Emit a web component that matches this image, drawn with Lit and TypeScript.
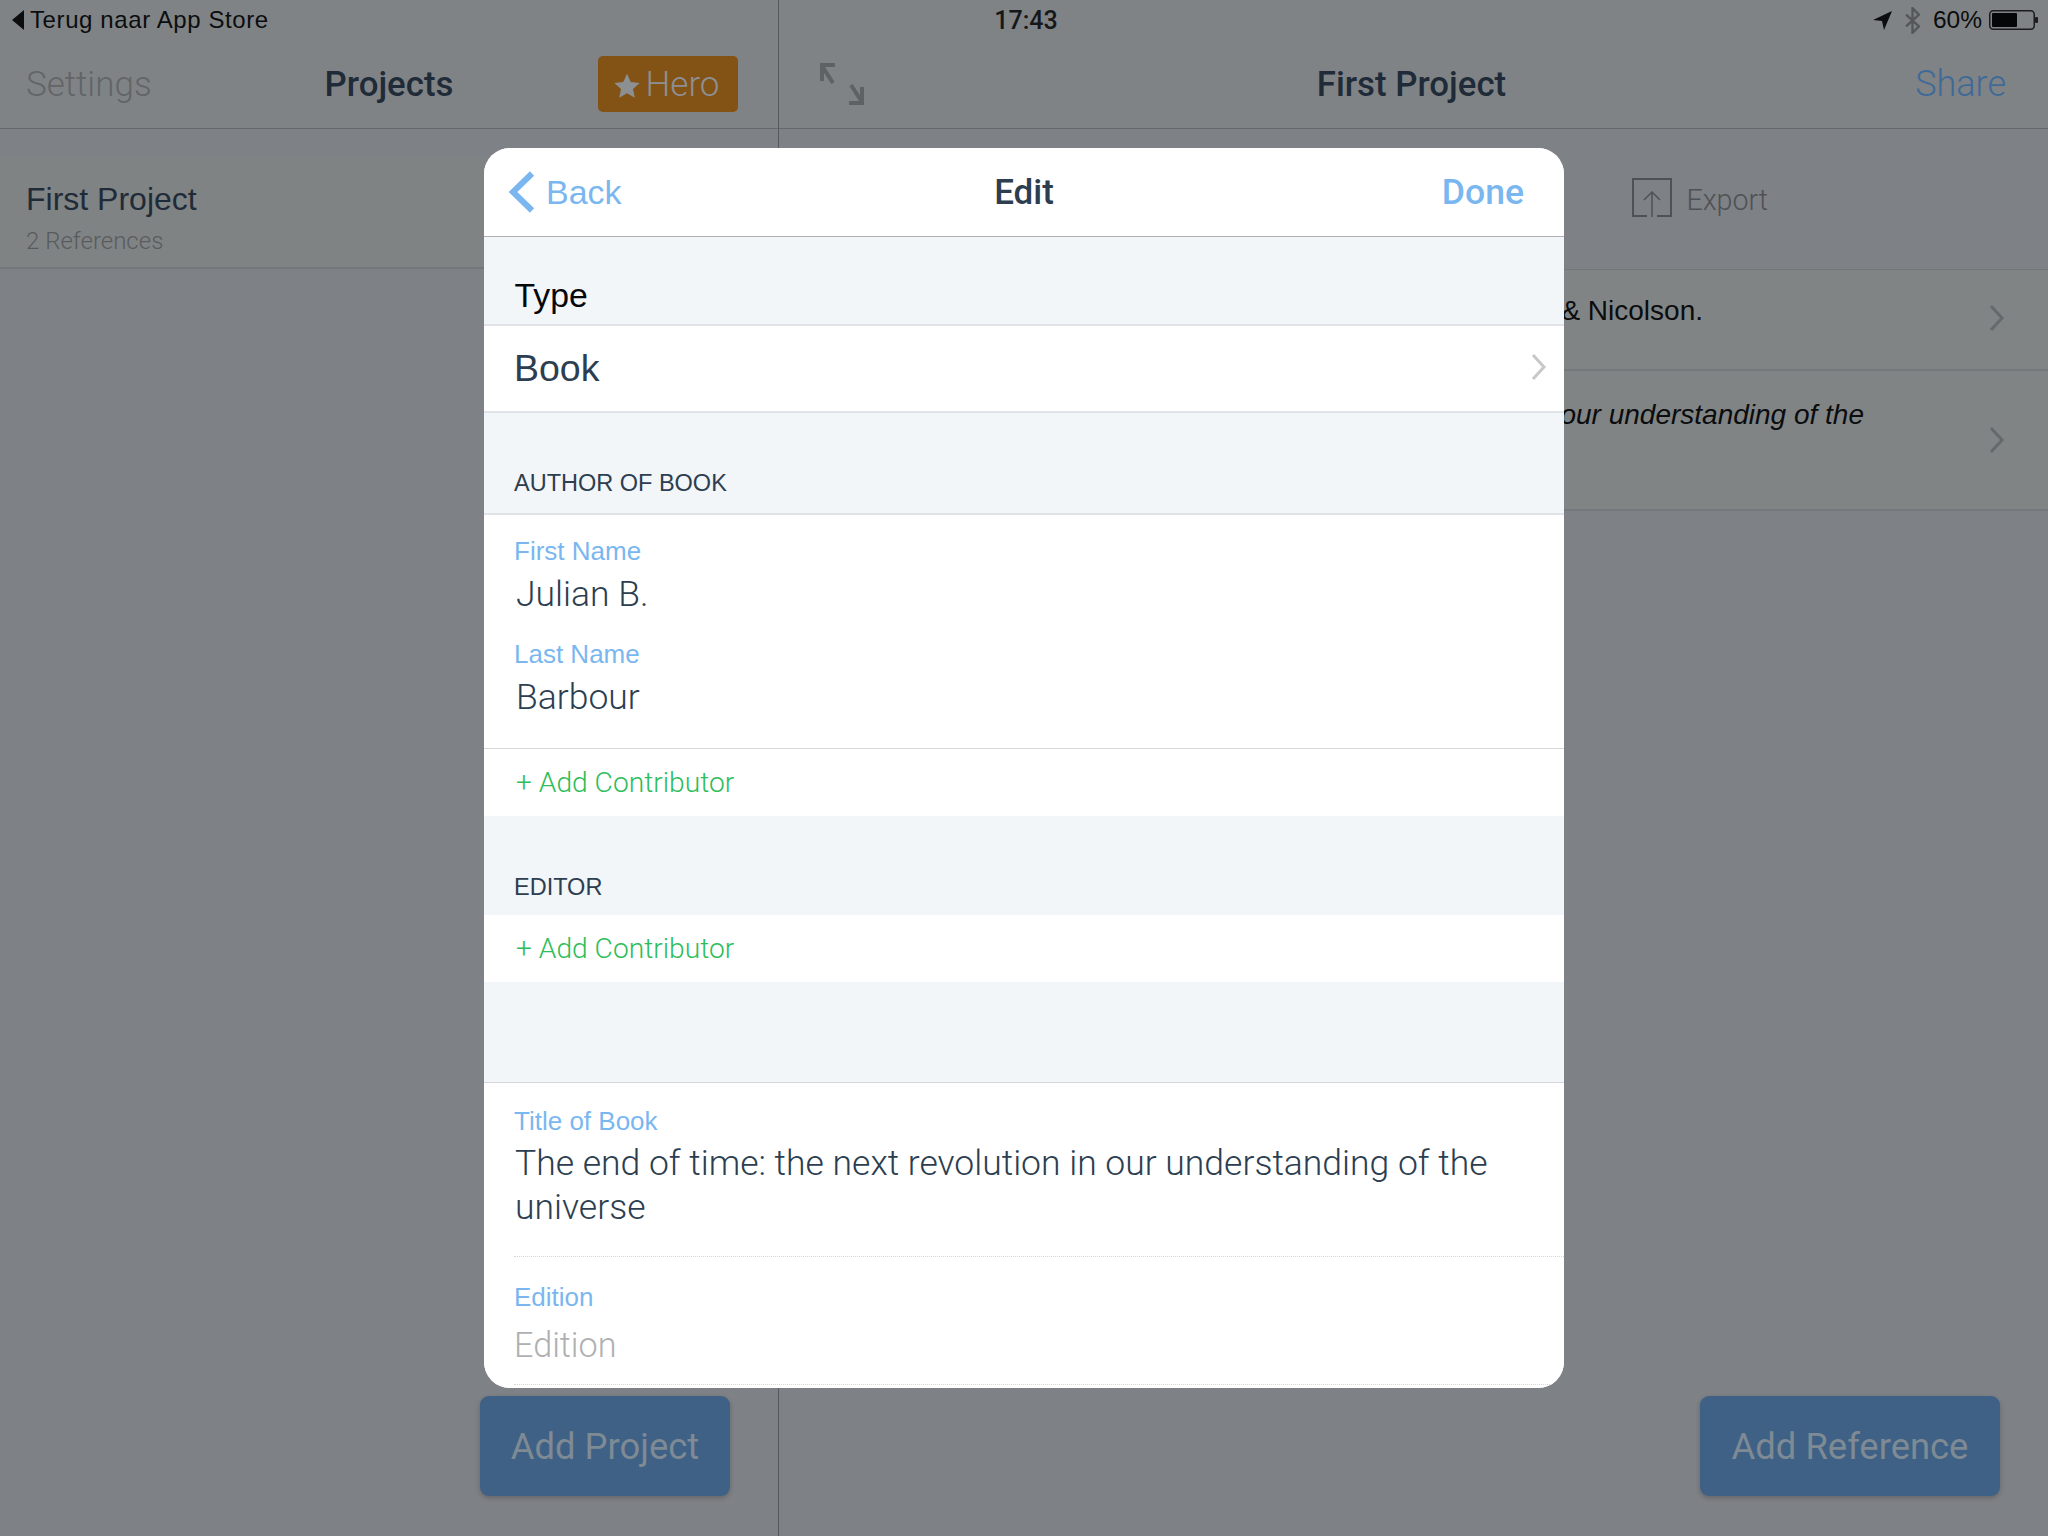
import { LitElement, html, css } from "lit";
import { customElement } from "lit/decorators.js";

const chevron = () => html`<svg viewBox="0 0 16 30" fill="none"><path d="M2 3l11 12L2 27" stroke="currentColor" stroke-width="3"/></svg>`;

@customElement("app-root")
export class AppRoot extends LitElement {
  static styles = css`
    :host { display: block; width: 2048px; height: 1536px; position: relative; overflow: hidden; background: #7e8185; font-family: "Liberation Sans", Arial, sans-serif; }
    * { box-sizing: border-box; }
    .page { display: grid; grid-template-columns: 779px 1269px; height: 1536px; }
    .pane { position: relative; display: flex; flex-direction: column; min-width: 0; }
    .pane.left { border-right: 1px solid #55585d; }
    .navbar { height: 129px; flex: none; background: #808385; border-bottom: 1px solid #65686c; padding: 40px 26px 0; display: grid; align-items: center; position: relative; }
    .left .navbar { grid-template-columns: 1fr auto 1fr; }
    .right .navbar { grid-template-columns: 1fr auto 1fr; padding: 40px 42px 0 38px; }
    .nav-muted { font-size: 35px; color: #626568; font-family: Roboto, sans-serif; font-weight: 300; }
    .nav-title { font-family: Roboto, sans-serif; font-weight: 500; font-size: 34.8px; color: #1f2b38; }
    .hero { justify-self: end; margin-right: 14px; width: 140px; height: 56px; background: #835316; border-radius: 5px; color: #8d9093; display: flex; align-items: center; justify-content: center; gap: 5px; font-size: 35px; font-family: Roboto, sans-serif; font-weight: 300; padding-right: 4px; }
    .hero svg { width: 28px; height: 28px; margin-top: 4px; }
    .expand { width: 46px; height: 42px; color: #5f6265; margin-top: -1px; margin-left: 2px; }
    .share { justify-self: end; font-size: 36px; color: #3f6a98; font-family: Roboto, sans-serif; font-weight: 300; }
    .proj-row { margin-top: 29px; height: 111px; background: #808384; border-bottom: 2px solid #74777a; padding: 19px 26px 0; }
    .proj-name { font-size: 32px; line-height: 44px; color: #1f2b38; }
    .proj-sub { font-size: 24px; line-height: 30px; margin-top: 5px; color: #585b5e; font-family: Roboto, sans-serif; font-weight: 300; }
    .toolbar { height: 141px; flex: none; display: flex; align-items: flex-start; justify-content: flex-end; padding: 47px 280px 0 0; gap: 14px; color: #4e5155; border-bottom: 1px solid #74777a; }
    .toolbar svg { width: 40px; height: 40px; margin-top: 2px; }
    .export { font-size: 28.6px; line-height: 48px; font-family: Roboto, sans-serif; font-weight: 300; }
    .ref { display: flex; align-items: flex-start; justify-content: flex-end; background: #818485; border-bottom: 2px solid #75787b; font-size: 28px; line-height: 40px; color: #0a0c0e; position: relative; flex: none; }
    .ref.one { height: 101px; padding: 21px 345px 0 0; }
    .ref.two { height: 140px; padding: 24px 184px 0 0; font-style: italic; }
    .ref svg { position: absolute; right: 43px; width: 16px; height: 30px; color: #66696c; }
    .ref.one svg { top: 33px; }
    .ref.two svg { top: 54px; }
    .fab { position: absolute; bottom: 40px; right: 48px; height: 100px; background: #3f6186; border-radius: 9px; color: #7e8a94; box-shadow: 0 2px 5px rgba(0,0,0,.22); display: flex; align-items: center; justify-content: center; font-size: 36.4px; font-family: Roboto, sans-serif; font-weight: 400; }
    .fab.p { width: 250px; }
    .fab.r { width: 300px; }

    .status { position: absolute; inset: 0 0 auto 0; height: 40px; display: grid; grid-template-columns: 1fr auto 1fr; align-items: center; padding: 0 10px 0 12px; color: #0b0d0e; font-size: 24px; }
    .st-left { display: flex; align-items: center; gap: 6px; letter-spacing: .6px; }
    .tri { width: 0; height: 0; border: 10px solid transparent; border-left: 0; border-right: 12px solid #0b0d0e; }
    .time { font-family: Roboto, sans-serif; font-weight: 500; font-size: 25px; color: #15181a; padding-left: 2px; }
    .st-right { display: flex; align-items: center; justify-content: flex-end; }
    .st-right .loc { width: 19px; height: 19px; margin-right: 13px; }
    .st-right .bt { width: 15px; height: 27px; margin-right: 13px; color: #54575a; }
    .pct { margin-right: 7px; font-size: 24.5px; }
    .batt { width: 49px; height: 20px; }

    .modal { position: absolute; left: 484px; top: 148px; width: 1080px; height: 1240px; border-radius: 26px; overflow: hidden; background: #f3f6f9; display: flex; flex-direction: column; }
    .m-nav { height: 89px; flex: none; background: #fff; border-bottom: 1px solid #b0b0b0; display: grid; grid-template-columns: 1fr auto 1fr; align-items: center; padding: 0 40px; }
    .back { display: flex; align-items: center; gap: 10px; color: #7ab7f0; font-size: 34px; margin-left: -16px; }
    .back svg { width: 28px; height: 42px; }
    .m-title { font-family: Roboto, sans-serif; font-weight: 500; font-size: 35px; color: #2c3e50; }
    .done { justify-self: end; font-family: Roboto, sans-serif; font-weight: 500; font-size: 35.6px; color: #7ab7f0; }
    .type-h { height: 89px; flex: none; display: flex; align-items: flex-end; padding: 0 30.5px 9px; font-size: 33.8px; line-height: 40px; color: #060708; border-bottom: 2px solid #e0e4e9; }
    .row-book { height: 87px; flex: none; background: #fff; display: flex; align-items: center; justify-content: space-between; padding: 0 17px 0 30px; font-size: 37.5px; color: #2c3e50; border-bottom: 2px solid #e0e4e9; }
    .row-book svg { width: 16px; height: 30px; color: #c8c8ca; margin-top: -3px; }
    .sec { flex: none; display: flex; align-items: flex-end; padding: 0 30px; font-size: 23.5px; line-height: 30px; color: #2c3e50; }
    .sec.a { height: 102px; padding-bottom: 15px; border-bottom: 2px solid #e0e4e9; }
    .sec.e { height: 99px; padding-bottom: 13px; }
    .block { flex: none; background: #fff; padding: 0 30px; }
    .names { height: 234px; padding-top: 22px; border-bottom: 1px solid #d5d7da; }
    .label { font-size: 26px; line-height: 28px; color: #7ab7f0; }
    .value { font-family: Roboto, sans-serif; font-weight: 300; font-size: 35.5px; line-height: 44px; color: #2c3e50; padding-left: 1px; }
    .names .value { margin-top: 7px; padding-left: 2px; }
    .names .label + .value + .label { margin-top: 24px; }
    .add { height: 67px; flex: none; background: #fff; display: flex; align-items: center; padding: 0 32px; color: #2ebd59; font-family: Roboto, sans-serif; font-weight: 300; font-size: 28.2px; }
    .gap { height: 101px; flex: none; border-bottom: 1px solid #d5d7da; }
    .title-f { height: 174px; padding-top: 24px; position: relative; }
    .title-f .value { margin-top: 6px; }
    .rule { height: 0; flex: none; border-top: 1px dotted #d5d7da; position: absolute; left: 30px; right: 0; bottom: 0; }
    .edit-f { flex: 1; padding-top: 26px; position: relative; }
    .edit-f .value { margin-top: 12px; color: #afb0b1; padding-left: 0; font-weight: 300; font-size: 34.2px; }
    .edit-f .rule { bottom: 3px; }
  `;

  render() {
    return html`
      <div class="page">
        <section class="pane left">
          <header class="navbar">
            <span class="nav-muted">Settings</span>
            <span class="nav-title">Projects</span>
            <div class="hero">
              <svg viewBox="0 0 24 24"><path fill="#8d9093" d="M12 1.5l3.2 7.1 7.6.8-5.7 5.1 1.6 7.6L12 18.3l-6.7 3.8 1.6-7.6-5.7-5.1 7.6-.8z"/></svg>
              <span>Hero</span>
            </div>
          </header>
          <div class="proj-row">
            <div class="proj-name">First Project</div>
            <div class="proj-sub">2 References</div>
          </div>
          <div class="fab p">Add Project</div>
        </section>
        <section class="pane right">
          <header class="navbar">
            <svg class="expand" viewBox="0 0 46 42" fill="none" stroke="currentColor">
              <path d="M3 3l11 17" stroke-width="4"/><path d="M1 2h15M3 0v18" stroke-width="4"/>
              <path d="M43 39L32 22" stroke-width="4"/><path d="M45 40H30M43 42V24" stroke-width="4"/>
            </svg>
            <span class="nav-title">First Project</span>
            <span class="share">Share</span>
          </header>
          <div class="toolbar">
            <svg viewBox="0 0 40 40" fill="none" stroke="currentColor" stroke-width="2">
              <path d="M15 38H1V1h38v37H25"/><path d="M20 39V15M12 22l8-8 8 8" stroke-width="1.5"/>
            </svg>
            <span class="export">Export</span>
          </div>
          <div class="ref one"><span>Weidenfeld &amp; Nicolson.</span>${chevron()}</div>
          <div class="ref two"><span>The end of time: the next revolution in our understanding of the</span>${chevron()}</div>
          <div class="fab r">Add Reference</div>
        </section>
      </div>

      <div class="status">
        <div class="st-left"><i class="tri"></i><span>Terug naar App Store</span></div>
        <div class="time">17:43</div>
        <div class="st-right">
          <svg class="loc" viewBox="0 0 19 19"><path fill="#0b0d0e" d="M19 0L0 9l9 1 2 9z"/></svg>
          <svg class="bt" viewBox="0 0 14 25" fill="none" stroke="currentColor" stroke-width="2.2"><path d="M1 7l12 11-6 6V1l6 6L1 18"/></svg>
          <span class="pct">60%</span>
          <svg class="batt" viewBox="0 0 49 20">
            <rect x=".75" y=".75" width="44.5" height="18.5" rx="3.5" fill="none" stroke="#1a1c1e" stroke-width="1.5"/>
            <rect x="3" y="3" width="25" height="14" rx="1" fill="#050607"/>
            <rect x="46" y="7" width="3" height="6" rx="1" fill="#1a1c1e"/>
          </svg>
        </div>
      </div>

      <div class="modal">
        <div class="m-nav">
          <div class="back">
            <svg viewBox="0 0 28 42" fill="none"><path d="M24 2.5L5 21l19 18.5" stroke="currentColor" stroke-width="6"/></svg>
            <span>Back</span>
          </div>
          <span class="m-title">Edit</span>
          <span class="done">Done</span>
        </div>
        <div class="type-h">Type</div>
        <div class="row-book"><span>Book</span>${chevron()}</div>
        <div class="sec a">AUTHOR OF BOOK</div>
        <div class="block names">
          <div class="label">First Name</div>
          <div class="value">Julian B.</div>
          <div class="label">Last Name</div>
          <div class="value">Barbour</div>
        </div>
        <div class="add">+ Add Contributor</div>
        <div class="sec e">EDITOR</div>
        <div class="add">+ Add Contributor</div>
        <div class="gap"></div>
        <div class="block title-f">
          <div class="label">Title of Book</div>
          <div class="value">The end of time: the next revolution in our understanding of the universe</div>
          <div class="rule"></div>
        </div>
        <div class="block edit-f">
          <div class="label">Edition</div>
          <div class="value">Edition</div>
          <div class="rule"></div>
        </div>
      </div>
    `;
  }
}
